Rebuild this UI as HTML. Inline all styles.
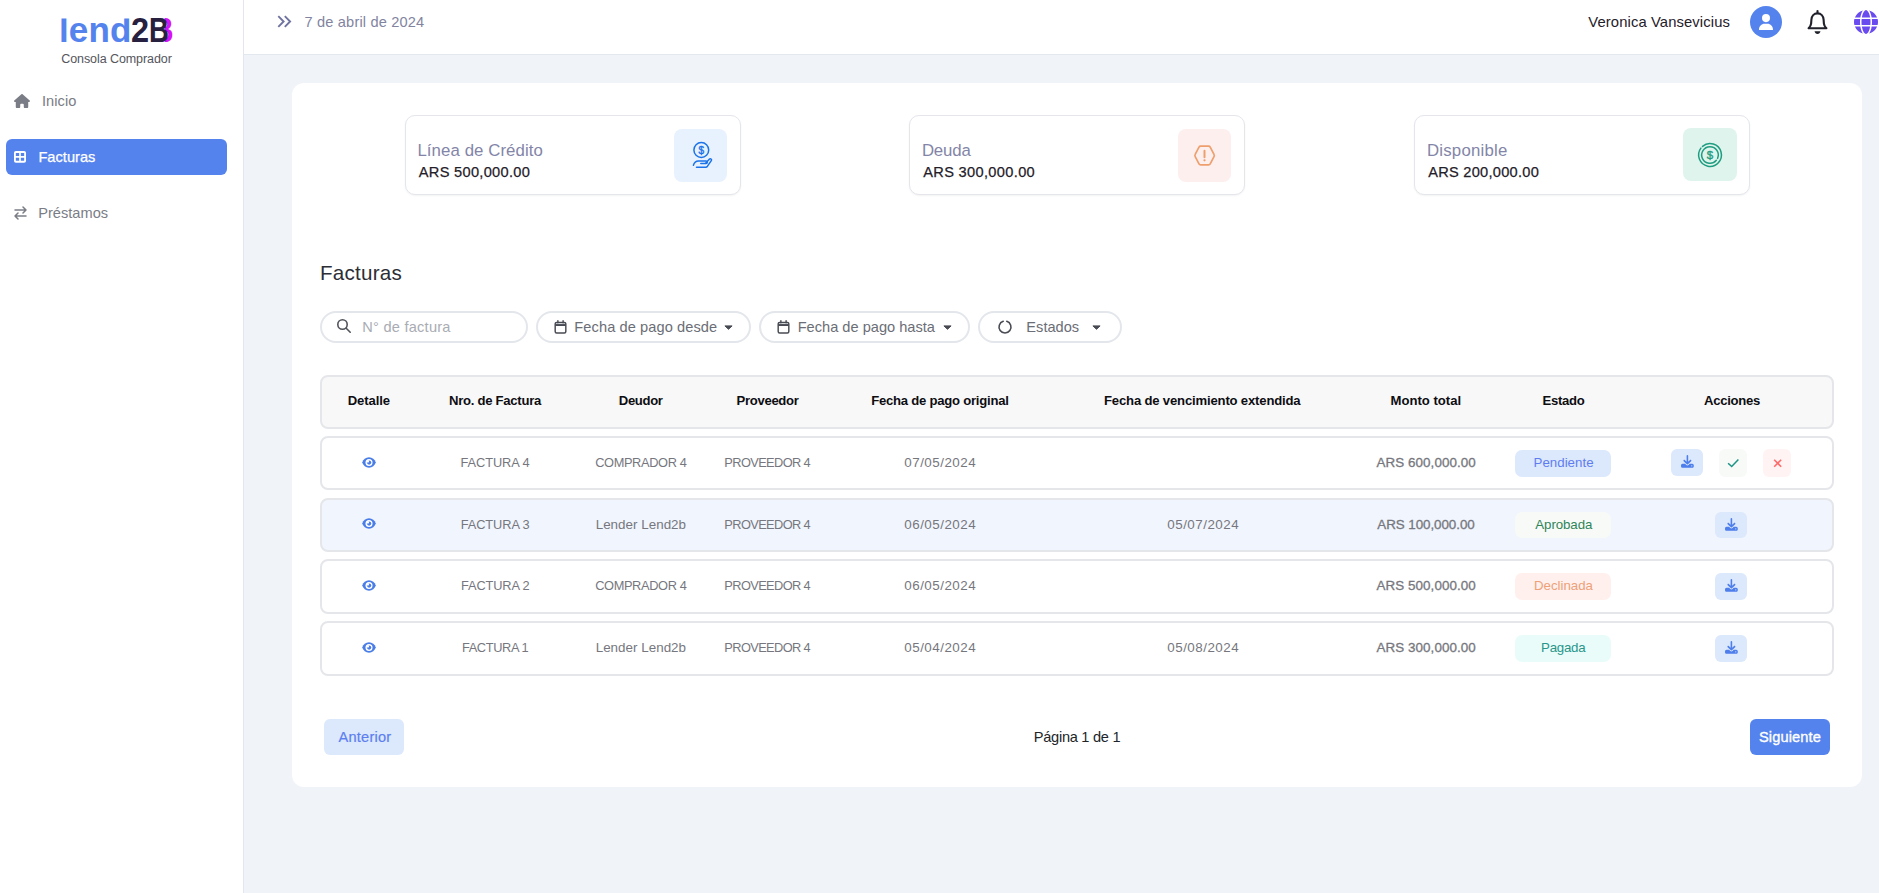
<!DOCTYPE html>
<html lang="es">
<head>
<meta charset="utf-8">
<title>lend2B - Consola Comprador</title>
<style>
*{box-sizing:border-box;margin:0;padding:0}
html,body{width:1879px;height:893px;overflow:hidden}
body{font-family:"Liberation Sans",sans-serif;background:#f0f3f8;color:#212529;position:relative}
.abs{position:absolute}
#side{position:absolute;left:0;top:0;width:244px;height:893px;background:#fff;border-right:1px solid #e3e6ec}
#logo{position:absolute;left:59px;top:10px;font-size:35px;font-weight:700;line-height:40px;white-space:nowrap;height:40px;width:130px}
#logo span{position:absolute;top:0;display:block;transform-origin:0 50%}
#logo .l{color:#5583ee;left:0;letter-spacing:.15px;clip-path:inset(8.5px 0 0 0)}
#logo .d{color:#27213f;left:71.8px;transform:scaleX(.93)}
#logo .b{color:#27213f;left:89.9px;transform:scaleX(.79)}
#logo .b:before{content:"B";position:absolute;left:5.7px;top:0;color:#d512f5;z-index:-1;clip-path:inset(0 0 0 14px)}
.nav{position:absolute;left:6px;width:221px;height:36px;border-radius:6px}
.nav svg{position:absolute}
.nav.on{background:#5583ee}
#head{position:absolute;left:244px;top:0;width:1635px;height:55px;background:#fff;border-bottom:1px solid #e3e8ef}
#card{position:absolute;left:292px;top:83px;width:1570px;height:704px;background:#fff;border-radius:12px}
.stat{position:absolute;top:115px;width:336px;height:80px;background:#fff;border:1px solid #e4e6ec;border-radius:10px;box-shadow:0 1px 2px rgba(0,0,0,.05)}
.stat .ic{position:absolute;height:53px;border-radius:8px}
.stat .ic svg{position:absolute;left:0;top:0}
.flt{position:absolute;top:311px;height:32px;border:2px solid #e3e6eb;border-radius:16px;background:#fff}
.flt svg{position:absolute}
.row{position:absolute;left:320px;width:1514px;border:2px solid #e4e6ea;border-radius:8px;background:#fff}
.row.hd{background:#f8f8f8}
.row.alt{background:#f1f5fd}
.bx{position:absolute;border-radius:7px}
.bx svg{position:absolute;left:0;top:0}
.t{position:absolute;white-space:nowrap;line-height:20px;height:20px}
.t-sub{font-size:12.5px;color:#55555c}
.t-nav{font-size:14.6px;color:#7a7d85}
.t-nav.on{color:#fff;-webkit-text-stroke:.25px #fff}
.t-date{font-size:14.6px;color:#82849f}
.t-user{font-size:14.8px;color:#1f2029}
.t-st{font-size:16.8px;color:#8385a8}
.t-sv{font-size:14.6px;color:#1f2029;-webkit-text-stroke:.25px #1f2029}
.t-h2{font-size:20.6px;color:#2c2e35}
.t-f{font-size:14.6px;color:#6b6e76}
.t-f.ph{color:#a9acb3}
.t-th{font-size:13.1px;font-weight:700;color:#0d0d12}
.t-td{font-size:12.8px;color:#76777e}
.t-td.n{font-size:13.4px}
.t-td.m{-webkit-text-stroke:.3px #76777e}
.t-bd{font-size:13.3px}
.t-pg{font-size:14.6px;color:#212529}
.t-pb{font-size:14.6px;-webkit-text-stroke:.2px currentColor}
.t-pb.sg{color:#fff;-webkit-text-stroke:.35px #fff}
</style>
</head>
<body>
<div id="side">
<div id="logo"><span class="l">lend</span><span class="d">2</span><span class="b">B</span></div>
<div class="nav" style="top:83px"><svg style="left:8px;top:10.800px" width="16" height="14.200" preserveAspectRatio="none" viewBox="0 0 576 512"><path fill="#7a7d85" d="M575.8 255.5c0 18-15 32.100-32 32.100h-32l.7 160.200c0 2.700-.2 5.400-.5 8.100V472c0 22.100-17.900 40-40 40H456c-1.100 0-2.200 0-3.300-.1-1.400.1-2.800.1-4.200.1H392c-22.100 0-40-17.900-40-40V384c0-17.700-14.300-32-32-32h-64c-17.700 0-32 14.300-32 32v88c0 22.100-17.900 40-40 40h-55.900c-1.500 0-3-.1-4.500-.2-1.200.1-2.400.2-3.600.2H104c-22.100 0-40-17.900-40-40V360c0-.9 0-1.900.1-2.800V287.600H32c-18 0-32-14-32-32.100 0-9 3-17 10-24L266.400 8c7-7 15-8 22-8s15 2 21 7l255.400 224.500c8 7 12 15 11 24z"/></svg></div>
<div class="nav on" style="top:139px"><svg style="left:8px;top:12px" width="12" height="11.800" viewBox="0 0 13 13" preserveAspectRatio="none"><path fill="#fff" fill-rule="evenodd" d="M2 0h9a2 2 0 0 1 2 2v9a2 2 0 0 1-2 2H2a2 2 0 0 1-2-2V2a2 2 0 0 1 2-2zm0 2.200v3.300h3.600V2.200zm5.400 0v3.300H11V2.200zM2 7.400v3.400h3.600V7.400zm5.400 0v3.400H11V7.400z"/></svg></div>
<div class="nav" style="top:195px"><svg style="left:8px;top:11px" width="13" height="14" viewBox="0 0 13 14" fill="none" stroke="#7a7d85" stroke-width="1.500" stroke-linecap="round" stroke-linejoin="round"><path d="M1 4h11M9 1l3 3-3 3M12 10H1M4 7l-3 3 3 3"/></svg></div>
</div>
<div id="head">
  <svg class="abs" style="left:33px;top:15px" width="15" height="13" viewBox="0 0 15 13" fill="none" stroke="#7073a0" stroke-width="1.900"><path d="M1.300 1.200l5.300 5.300-5.300 5.300M7.800 1.200l5.300 5.300-5.300 5.300"/></svg>
  <div class="abs" style="left:1506px;top:6px;width:32px;height:32px;border-radius:50%;background:#5583ee">
    <svg class="abs" style="left:9px;top:7.800px" width="14" height="16.400" viewBox="0 0 448 512" preserveAspectRatio="none"><path fill="#fff" d="M224 256A128 128 0 1 0 224 0a128 128 0 1 0 0 256zm-45.700 48C79.800 304 0 383.800 0 482.300C0 498.700 13.300 512 29.700 512H418.300c16.400 0 29.700-13.300 29.700-29.700C448 383.800 368.200 304 269.700 304H178.300z"/></svg>
  </div>
  <svg class="abs" style="left:1562px;top:9px" width="23" height="26" viewBox="0 0 23 26" fill="none" stroke="#1f2029" stroke-width="2.100" stroke-linejoin="round" stroke-linecap="round"><path d="M11.500 2v2"/><path d="M11.500 4.400c-3.600 0-5.900 2.700-6.100 6.300l-.3 3.900c-.2 1.900-.9 3.100-2.500 4.700h17.800c-1.600-1.600-2.300-2.800-2.500-4.700l-.3-3.900c-.2-3.600-2.500-6.300-6.100-6.300z"/><path d="M8.500 22.300h6c-.3 1.600-1.500 2.600-3 2.600s-2.700-1-3-2.600z" fill="#1f2029" stroke="none"/></svg>
  <svg class="abs" style="left:1610px;top:10px" width="24" height="24" viewBox="0 0 512 512"><path fill="#6a4bf0" d="M352 256c0 22.200-1.200 43.600-3.300 64H163.300c-2.200-20.400-3.300-41.800-3.300-64s1.200-43.600 3.300-64H348.700c2.200 20.400 3.300 41.800 3.300 64zm28.800-64H503.900c5.300 20.500 8.100 41.900 8.100 64s-2.800 43.500-8.100 64H380.800c2.100-20.600 3.200-42 3.200-64s-1.100-43.400-3.200-64zm112.600-32H376.700c-10-63.900-29.800-117.400-55.300-151.600c78.300 20.700 142 77.500 171.900 151.600zm-149.100 0H167.700c6.100-36.400 15.500-68.600 27-94.700c10.500-23.600 22.200-40.700 33.500-51.500C239.400 3.200 248.700 0 256 0s16.600 3.200 27.800 13.800c11.300 10.800 23 27.900 33.500 51.500c11.600 26 20.900 58.200 27 94.700zm-209 0H18.600C48.600 85.900 112.200 29.100 190.600 8.400C165.100 42.600 145.300 96.100 135.300 160zM8.100 192H131.200c-2.100 20.600-3.200 42-3.200 64s1.100 43.400 3.200 64H8.100C2.800 299.500 0 278.100 0 256s2.800-43.500 8.100-64zM194.700 446.600c-11.600-26-20.900-58.200-27-94.600H344.300c-6.100 36.400-15.500 68.600-27 94.600c-10.500 23.600-22.200 40.700-33.500 51.500C272.600 508.800 263.300 512 256 512s-16.600-3.200-27.800-13.800c-11.300-10.800-23-27.900-33.500-51.500zM135.300 352c10 63.900 29.800 117.400 55.300 151.600C112.200 482.900 48.600 426.100 18.600 352H135.300zm358.100 0c-30 74.100-93.600 130.900-171.900 151.600c25.500-34.200 45.200-87.700 55.300-151.600H493.400z"/></svg>
</div>
<div id="card"></div>
<div class="stat" style="left:405px">
  
  <div class="ic" style="background:#e8f2fe;left:268px;top:13px;width:53px">
    <svg width="53" height="53" viewBox="0 0 53 53" fill="none" stroke="#1a73e8" stroke-width="1.500" stroke-linecap="round" stroke-linejoin="round">
      <circle cx="27.300" cy="21" r="7.400"/>
      <text x="27.300" y="24.500" font-family="Liberation Sans, sans-serif" font-size="10" text-anchor="middle" fill="#1a73e8" stroke="#1a73e8" stroke-width=".4">$</text>
      <path d="M19.400 36.200c.8-2.600 2.500-4.200 5-4.200h7.600c1.700 0 1.700 2.600 0 2.600h-5.200"/>
      <path d="M22.500 38.200h9.200c.8 0 1.300-.3 1.800-1l3.800-5.600c.9-1.300-.8-2.500-1.800-1.500l-3.700 3.900"/>
    </svg>
  </div>
</div>
<div class="stat" style="left:909px">
  
  <div class="ic" style="background:#fcefee;left:268px;top:13px;width:53px">
    <svg width="53" height="53" viewBox="0 0 53 53" fill="none" stroke="#ee9f6d" stroke-width="1.700" stroke-linecap="round" stroke-linejoin="round">
      <path d="M22.600 17.200h8c.7 0 1.300.4 1.600 1l3.800 7.200c.4.700.4 1.500 0 2.200l-3.800 7.200c-.3.600-.9 1-1.600 1h-8c-.7 0-1.300-.4-1.600-1l-3.800-7.200c-.4-.7-.4-1.500 0-2.200l3.800-7.200c.3-.6.900-1 1.600-1z"/>
      <path d="M26.500 21.800v6.400" stroke-width="2"/><circle cx="26.500" cy="31.300" r="1.150" fill="#ee9f6d" stroke="none"/>
    </svg>
  </div>
</div>
<div class="stat" style="left:1414px">
  
  <div class="ic" style="background:#dff4ec;left:268px;top:12px;width:54px">
    <svg width="54" height="53" viewBox="0 0 54 53" fill="none" stroke="#1f9d80" stroke-width="1.500" stroke-linecap="round" stroke-linejoin="round">
      <path d="M19.520 18.400A11.400 11.400 0 1 1 17.900 20.140"/>
      <path d="M33.360 32.340A8.300 8.300 0 1 1 34.580 30.380"/>
      <text x="27" y="31" font-family="Liberation Sans, sans-serif" font-size="11.500" text-anchor="middle" fill="#1f9d80" stroke="#1f9d80" stroke-width=".4">$</text>
    </svg>
  </div>
</div>
<div class="flt" style="left:320px;width:208px">
  <svg style="left:14px;top:5px" width="16" height="16" viewBox="0 0 16 16" fill="none" stroke="#50535a" stroke-width="1.600" stroke-linecap="round"><circle cx="6.500" cy="6.500" r="4.700"/><path d="M10.200 10.200l4 4"/></svg>
</div>
<div class="flt" style="left:536px;width:215px">
  <svg style="left:16px;top:6.500px" width="13" height="14.500" viewBox="0 0 13 15" fill="none" stroke="#484b53" stroke-width="1.500" stroke-linejoin="round"><rect x="1" y="2.500" width="11" height="11" rx="1.500"/><path d="M1 5.200h11" stroke-width="2"/><path d="M3.800 .8v2M9.200 .8v2" stroke-linecap="round"/></svg>
  <svg style="left:186px;top:12px" width="9" height="6" viewBox="0 0 9 6"><path d="M.9.900h7.200L4.500 4.300z" fill="#484b53" stroke="#484b53" stroke-width="1" stroke-linejoin="round"/></svg>
</div>
<div class="flt" style="left:759px;width:211px">
  <svg style="left:16px;top:6.500px" width="13" height="14.500" viewBox="0 0 13 15" fill="none" stroke="#484b53" stroke-width="1.500" stroke-linejoin="round"><rect x="1" y="2.500" width="11" height="11" rx="1.500"/><path d="M1 5.200h11" stroke-width="2"/><path d="M3.800 .8v2M9.200 .8v2" stroke-linecap="round"/></svg>
  <svg style="left:182px;top:12px" width="9" height="6" viewBox="0 0 9 6"><path d="M.9.900h7.200L4.500 4.300z" fill="#484b53" stroke="#484b53" stroke-width="1" stroke-linejoin="round"/></svg>
</div>
<div class="flt" style="left:978px;width:144px">
  <svg style="left:17px;top:6px" width="16" height="16" viewBox="0 0 16 16" fill="none" stroke="#484b53" stroke-width="1.600" stroke-linecap="round"><path d="M6.200 2.300A6 6 0 1 0 9.800 2.300"/></svg>
  <svg style="left:112px;top:12px" width="9" height="6" viewBox="0 0 9 6"><path d="M.9.900h7.200L4.500 4.300z" fill="#484b53" stroke="#484b53" stroke-width="1" stroke-linejoin="round"/></svg>
</div>
<div class="row hd" style="top:374.5px;height:54.3px"></div>
<div class="row" style="top:436.2px;height:54.3px"></div>
<div class="bx" style="left:361.75px;top:456.55px;width:14px;height:11px"><svg width="14" height="11" viewBox="0 0 14 11"><path d="M7 .3C3.700.3 1.300 2.500.2 5.500 1.300 8.500 3.700 10.700 7 10.700s5.700-2.200 6.800-5.200C12.700 2.500 10.300.3 7 .3z" fill="#4a7de8"/><circle cx="7" cy="5.500" r="3.500" fill="#fff"/><circle cx="7.100" cy="5.600" r="2.150" fill="#4a7de8"/><circle cx="5.900" cy="4.500" r="1.150" fill="#fff"/></svg></div>
<div class="bx" style="left:1515.200px;top:450px;width:95.800px;height:26.8px;background:#dce8fc"></div>
<div class="bx" style="left:1671px;top:449px;width:32px;height:27px;background:#dce8fc;border-radius:6px"><svg style="left:9.900px;top:6.3px" width="12.800" height="12.800" viewBox="0 0 512 512"><path fill="#4d7eec" d="M288 32c0-17.700-14.300-32-32-32s-32 14.300-32 32V274.700l-73.400-73.400c-12.500-12.500-32.800-12.500-45.300 0s-12.500 32.800 0 45.300l128 128c12.500 12.500 32.800 12.500 45.300 0l128-128c12.500-12.500 12.500-32.800 0-45.300s-32.800-12.500-45.300 0L288 274.700V32zM64 352c-35.300 0-64 28.700-64 64v32c0 35.300 28.700 64 64 64H448c35.300 0 64-28.700 64-64V416c0-35.300-28.700-64-64-64H346.500l-45.300 45.300c-25 25-65.500 25-90.500 0L165.500 352H64zm368 56a24 24 0 1 1 0 48 24 24 0 1 1 0-48z"/></svg></div>
<div class="bx" style="left:1719.200px;top:449.100px;width:27.600px;height:27.600px;background:#f8faf8;border-radius:6px"><svg width="28" height="28" viewBox="0 0 28 28" fill="none" stroke="#1d9585" stroke-width="1.550"><path d="M9.100 14.200l3.600 3.300 6.700-7"/></svg></div>
<div class="bx" style="left:1763.200px;top:449.100px;width:27.700px;height:27.600px;background:#fff4f3;border-radius:6px"><svg width="28" height="28" viewBox="0 0 28 28" fill="none" stroke="#ff6b6b" stroke-width="1.600"><path d="M11.200 10.700l7 7M18.200 10.700l-7 7"/></svg></div>
<div class="row alt" style="top:498.2px;height:53.8px"></div>
<div class="bx" style="left:361.75px;top:518.3px;width:14px;height:11px"><svg width="14" height="11" viewBox="0 0 14 11"><path d="M7 .3C3.700.3 1.300 2.500.2 5.500 1.300 8.500 3.700 10.700 7 10.700s5.700-2.200 6.800-5.200C12.700 2.500 10.300.3 7 .3z" fill="#4a7de8"/><circle cx="7" cy="5.500" r="3.500" fill="#fff"/><circle cx="7.100" cy="5.600" r="2.150" fill="#4a7de8"/><circle cx="5.900" cy="4.500" r="1.150" fill="#fff"/></svg></div>
<div class="bx" style="left:1515.200px;top:512px;width:95.800px;height:26px;background:#f8faf7"></div>
<div class="bx" style="left:1714.900px;top:512px;width:32px;height:26px;background:#dce8fc;border-radius:6px"><svg style="left:9.900px;top:5.8px" width="12.800" height="12.800" viewBox="0 0 512 512"><path fill="#4d7eec" d="M288 32c0-17.700-14.300-32-32-32s-32 14.300-32 32V274.700l-73.400-73.400c-12.500-12.500-32.800-12.500-45.300 0s-12.500 32.800 0 45.300l128 128c12.500 12.500 32.800 12.500 45.300 0l128-128c12.500-12.500 12.500-32.800 0-45.300s-32.800-12.500-45.300 0L288 274.700V32zM64 352c-35.300 0-64 28.700-64 64v32c0 35.300 28.700 64 64 64H448c35.300 0 64-28.700 64-64V416c0-35.300-28.700-64-64-64H346.500l-45.300 45.300c-25 25-65.500 25-90.500 0L165.500 352H64zm368 56a24 24 0 1 1 0 48 24 24 0 1 1 0-48z"/></svg></div>
<div class="row" style="top:559.2px;height:54.8px"></div>
<div class="bx" style="left:361.75px;top:579.8px;width:14px;height:11px"><svg width="14" height="11" viewBox="0 0 14 11"><path d="M7 .3C3.700.3 1.300 2.500.2 5.500 1.300 8.500 3.700 10.700 7 10.700s5.700-2.200 6.800-5.200C12.700 2.500 10.300.3 7 .3z" fill="#4a7de8"/><circle cx="7" cy="5.500" r="3.500" fill="#fff"/><circle cx="7.100" cy="5.600" r="2.150" fill="#4a7de8"/><circle cx="5.900" cy="4.500" r="1.150" fill="#fff"/></svg></div>
<div class="bx" style="left:1515.200px;top:573.2px;width:95.800px;height:26.5px;background:#fff0ee"></div>
<div class="bx" style="left:1714.900px;top:573.2px;width:32px;height:26.5px;background:#dce8fc;border-radius:6px"><svg style="left:9.900px;top:6.05px" width="12.800" height="12.800" viewBox="0 0 512 512"><path fill="#4d7eec" d="M288 32c0-17.700-14.300-32-32-32s-32 14.300-32 32V274.700l-73.400-73.400c-12.500-12.500-32.800-12.500-45.300 0s-12.500 32.800 0 45.300l128 128c12.500 12.500 32.800 12.500 45.300 0l128-128c12.500-12.500 12.500-32.800 0-45.300s-32.800-12.500-45.300 0L288 274.700V32zM64 352c-35.300 0-64 28.700-64 64v32c0 35.300 28.700 64 64 64H448c35.300 0 64-28.700 64-64V416c0-35.300-28.700-64-64-64H346.500l-45.300 45.300c-25 25-65.500 25-90.500 0L165.500 352H64zm368 56a24 24 0 1 1 0 48 24 24 0 1 1 0-48z"/></svg></div>
<div class="row" style="top:621.3px;height:55.2px"></div>
<div class="bx" style="left:361.75px;top:642.1px;width:14px;height:11px"><svg width="14" height="11" viewBox="0 0 14 11"><path d="M7 .3C3.700.3 1.300 2.500.2 5.500 1.300 8.500 3.700 10.700 7 10.700s5.700-2.200 6.800-5.200C12.700 2.500 10.300.3 7 .3z" fill="#4a7de8"/><circle cx="7" cy="5.500" r="3.500" fill="#fff"/><circle cx="7.100" cy="5.600" r="2.150" fill="#4a7de8"/><circle cx="5.900" cy="4.500" r="1.150" fill="#fff"/></svg></div>
<div class="bx" style="left:1515.200px;top:635px;width:95.800px;height:27px;background:#eafcfa"></div>
<div class="bx" style="left:1714.900px;top:635px;width:32px;height:27px;background:#dce8fc;border-radius:6px"><svg style="left:9.900px;top:6.3px" width="12.800" height="12.800" viewBox="0 0 512 512"><path fill="#4d7eec" d="M288 32c0-17.700-14.300-32-32-32s-32 14.300-32 32V274.700l-73.400-73.400c-12.500-12.500-32.800-12.500-45.300 0s-12.500 32.800 0 45.300l128 128c12.500 12.500 32.800 12.500 45.300 0l128-128c12.500-12.500 12.500-32.800 0-45.300s-32.800-12.500-45.300 0L288 274.700V32zM64 352c-35.300 0-64 28.700-64 64v32c0 35.300 28.700 64 64 64H448c35.300 0 64-28.700 64-64V416c0-35.300-28.700-64-64-64H346.500l-45.300 45.300c-25 25-65.500 25-90.500 0L165.500 352H64zm368 56a24 24 0 1 1 0 48 24 24 0 1 1 0-48z"/></svg></div>
<div class="bx" style="left:324.250px;top:719.250px;width:79.500px;height:35.500px;background:#dce8fc;border-radius:6px"></div>
<div class="bx" style="left:1749.750px;top:719.250px;width:80px;height:35.500px;background:#5583ee;border-radius:6px"></div>
<div class="t t-sub" id="sub" style="left:61.24px;top:49px;letter-spacing:-0.08px">Consola Comprador</div>
<div class="t t-nav" id="n1" style="left:41.96px;top:91.01px;letter-spacing:0.06px">Inicio</div>
<div class="t t-nav on" id="n2" style="left:38.43px;top:147.01px;letter-spacing:0.02px">Facturas</div>
<div class="t t-nav" id="n3" style="left:38.24px;top:203px;letter-spacing:0.01px">Préstamos</div>
<div class="t t-date" id="date" style="left:304.59px;top:12px;letter-spacing:0.16px">7 de abril de 2024</div>
<div class="t t-user" id="user" style="left:1588.27px;top:12px;letter-spacing:0.11px">Veronica Vansevicius</div>
<div class="t t-st" id="s1t" style="left:417.45px;top:141px;letter-spacing:0.09px">Línea de Crédito</div>
<div class="t t-sv" id="s1v" style="left:418.79px;top:162px;letter-spacing:0.3px">ARS 500,000.00</div>
<div class="t t-st" id="s2t" style="left:921.92px;top:141px;letter-spacing:-0.16px">Deuda</div>
<div class="t t-sv" id="s2v" style="left:923.2px;top:162px;letter-spacing:0.34px">ARS 300,000.00</div>
<div class="t t-st" id="s3t" style="left:1426.92px;top:141px;letter-spacing:0.24px">Disponible</div>
<div class="t t-sv" id="s3v" style="left:1428.2px;top:162px;letter-spacing:0.27px">ARS 200,000.00</div>
<div class="t t-h2" id="h2" style="left:319.98px;top:263.01px;letter-spacing:0.24px">Facturas</div>
<div class="t t-f ph" id="f1" style="left:362.27px;top:317px;letter-spacing:0.24px">N° de factura</div>
<div class="t t-f" id="f2" style="left:574.36px;top:317px;letter-spacing:0.09px">Fecha de pago desde</div>
<div class="t t-f" id="f3" style="left:797.67px;top:317px;letter-spacing:0.01px">Fecha de pago hasta</div>
<div class="t t-f" id="f4" style="left:1026.36px;top:317px;letter-spacing:0.01px">Estados</div>
<div class="t t-th" id="h_0" style="left:347.75px;top:391px;letter-spacing:-0.12px">Detalle</div>
<div class="t t-th" id="h_1" style="left:449px;top:391px;letter-spacing:-0.27px">Nro. de Factura</div>
<div class="t t-th" id="h_2" style="left:618.78px;top:391px;letter-spacing:-0.34px">Deudor</div>
<div class="t t-th" id="h_3" style="left:736.55px;top:391px;letter-spacing:-0.31px">Proveedor</div>
<div class="t t-th" id="h_4" style="left:871.14px;top:391px;letter-spacing:-0.23px">Fecha de pago original</div>
<div class="t t-th" id="h_5" style="left:1104px;top:391px;letter-spacing:-0.17px">Fecha de vencimiento extendida</div>
<div class="t t-th" id="h_6" style="left:1390.62px;top:391px;letter-spacing:-0.01px">Monto total</div>
<div class="t t-th" id="h_7" style="left:1542.62px;top:391px;letter-spacing:-0.31px">Estado</div>
<div class="t t-th" id="h_8" style="left:1704.12px;top:391px;letter-spacing:-0.31px">Acciones</div>
<div class="t t-pg" id="pg" style="left:1033.82px;top:727px;letter-spacing:-0.28px">Página 1 de 1</div>
<div class="t t-pb" id="pa" style="left:338.5px;top:727px;letter-spacing:0.22px;color:#5b7ff0">Anterior</div>
<div class="t t-pb sg" id="ps" style="left:1758.89px;top:727px;letter-spacing:0.15px">Siguiente</div>
<div class="t t-td" id="r0_f" style="left:460.56px;top:453px;letter-spacing:-0.09px">FACTURA 4</div>
<div class="t t-td" id="r0_d" style="left:595.16px;top:453px;letter-spacing:-0.36px">COMPRADOR 4</div>
<div class="t t-td" id="r0_p" style="left:724.36px;top:453px;letter-spacing:-0.61px">PROVEEDOR 4</div>
<div class="t t-td n" id="r0_a" style="left:904.34px;top:453px;letter-spacing:0.47px">07/05/2024</div>
<div class="t t-td n m" id="r0_m" style="left:1376.46px;top:453px;letter-spacing:0.08px">ARS 600,000.00</div>
<div class="t t-bd" id="r0_s" style="left:1533.53px;top:453px;letter-spacing:0.02px;color:#5f7df0">Pendiente</div>
<div class="t t-td" id="r1_f" style="left:460.7px;top:515px;letter-spacing:-0.08px">FACTURA 3</div>
<div class="t t-td n" id="r1_d" style="left:595.7px;top:515px;letter-spacing:0.02px">Lender Lend2b</div>
<div class="t t-td" id="r1_p" style="left:724.36px;top:515px;letter-spacing:-0.61px">PROVEEDOR 4</div>
<div class="t t-td n" id="r1_a" style="left:904.34px;top:515px;letter-spacing:0.47px">06/05/2024</div>
<div class="t t-td n" id="r1_b" style="left:1167.3px;top:515px;letter-spacing:0.48px">05/07/2024</div>
<div class="t t-td n m" id="r1_m" style="left:1377.37px;top:515px;letter-spacing:-0.07px">ARS 100,000.00</div>
<div class="t t-bd" id="r1_s" style="left:1535.3px;top:515px;letter-spacing:-0.09px;color:#2f855a">Aprobada</div>
<div class="t t-td" id="r2_f" style="left:461.1px;top:576px;letter-spacing:-0.14px">FACTURA 2</div>
<div class="t t-td" id="r2_d" style="left:595.16px;top:576px;letter-spacing:-0.36px">COMPRADOR 4</div>
<div class="t t-td" id="r2_p" style="left:724.36px;top:576px;letter-spacing:-0.61px">PROVEEDOR 4</div>
<div class="t t-td n" id="r2_a" style="left:904.34px;top:576px;letter-spacing:0.47px">06/05/2024</div>
<div class="t t-td n m" id="r2_m" style="left:1376.46px;top:576px;letter-spacing:0.08px">ARS 500,000.00</div>
<div class="t t-bd" id="r2_s" style="left:1534px;top:576px;letter-spacing:-0.03px;color:#eea078">Declinada</div>
<div class="t t-td" id="r3_f" style="left:461.98px;top:638.01px;letter-spacing:-0.37px">FACTURA 1</div>
<div class="t t-td n" id="r3_d" style="left:595.7px;top:638.01px;letter-spacing:0.02px">Lender Lend2b</div>
<div class="t t-td" id="r3_p" style="left:724.36px;top:638.01px;letter-spacing:-0.61px">PROVEEDOR 4</div>
<div class="t t-td n" id="r3_a" style="left:904.34px;top:638.01px;letter-spacing:0.47px">05/04/2024</div>
<div class="t t-td n" id="r3_b" style="left:1167.3px;top:638.01px;letter-spacing:0.48px">05/08/2024</div>
<div class="t t-td n m" id="r3_m" style="left:1376.46px;top:638.01px;letter-spacing:0.08px">ARS 300,000.00</div>
<div class="t t-bd" id="r3_s" style="left:1541.08px;top:638.01px;letter-spacing:-0.27px;color:#28968a">Pagada</div>
</body>
</html>
